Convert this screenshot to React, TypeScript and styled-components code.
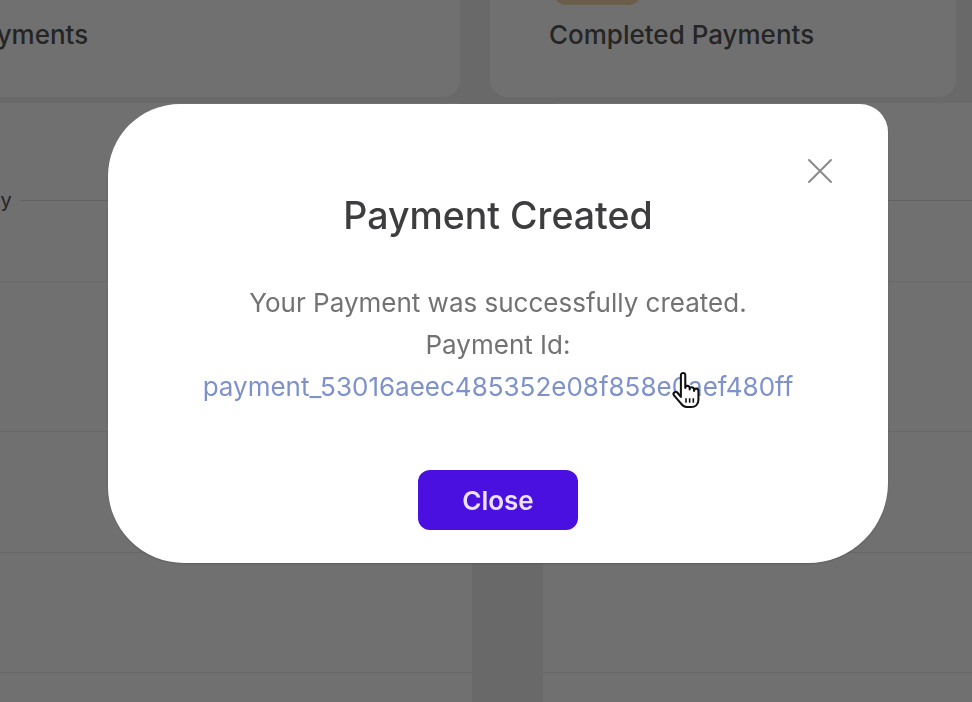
import styled, { createGlobalStyle } from 'styled-components'

const GlobalStyle = createGlobalStyle`
  html, body {
    margin: 0;
    padding: 0;
    background: #f0f0f0;
    overflow: hidden;
  }
  body {
    font-family: Inter, "Noto Sans", "Liberation Sans", sans-serif;
  }
`

const Page = styled.div`
  width: 972px;
  height: 702px;
  overflow: hidden;
  background: #f0f0f0;
`

const StatsRow = styled.div`
  display: grid;
  grid-template-columns: 662px 466px;
  gap: 30px;
  margin: -55px 0 0 -202px;
`

const StatCard = styled.div`
  display: flex;
  flex-direction: column;
  gap: 18px;
  padding: 20px 59px 50px;
  background: #fff;
  border-radius: 18px;
`

const StatBadge = styled.div`
  width: 85px;
  height: 40px;
  margin-left: 6px;
  border-radius: 10px;
  background: #f4d9ae;
`

const StatLabel = styled.span`
  font-size: 26px;
  line-height: 24px;
  font-weight: 500;
  color: #555;
  white-space: nowrap;
`

const ContentGrid = styled.div`
  display: grid;
  grid-template-columns: 683px 500px;
  gap: 71px;
  margin: 6px 0 0 -211px;
`

const Panel = styled.div`
  display: flex;
  flex-direction: column;
  background: #fff;
  border-radius: 16px;
  min-height: 640px;
`

const PanelHeader = styled.div`
  display: flex;
  align-items: center;
  gap: 9px;
  height: 30px;
  padding: 82px 0 0 67px;
`

const PanelTitle = styled.span`
  font-size: 20px;
  color: #555;
  white-space: nowrap;
`

const Rule = styled.div`
  flex: 1;
  height: 1px;
  background: #e0e0e0;
`

const PanelRow = styled.div<{ $h: number }>`
  height: ${({ $h }) => $h - 1}px;
  border-bottom: 1px solid #ededed;
`

const Overlay = styled.div`
  position: fixed;
  inset: 0;
  background: rgba(0, 0, 0, 0.56);
  display: flex;
  align-items: flex-start;
  padding: 104px 0 0 108px;
`

const Modal = styled.div`
  position: relative;
  width: 780px;
  height: 459px;
  box-sizing: border-box;
  padding-top: 88px;
  display: flex;
  flex-direction: column;
  align-items: center;
  background: #fff;
  border-radius: 72px 28px 80px 76px;
  box-shadow: 0 1px 2px rgba(0, 0, 0, 0.18);
`

const CloseIcon = styled.button`
  position: absolute;
  top: 51px;
  right: 52px;
  width: 32px;
  height: 32px;
  padding: 0;
  border: none;
  background: none;
  display: flex;
  align-items: center;
  justify-content: center;
`

const Title = styled.h2`
  margin: 0;
  font-size: 37.5px;
  line-height: 48px;
  font-weight: 500;
  color: #3d3d40;
`

const Message = styled.div`
  margin-top: 42px;
  display: flex;
  flex-direction: column;
  align-items: center;
  font-size: 26px;
  line-height: 42px;
  color: #727272;
`

const PaymentLink = styled.a`
  position: relative;
  color: #7e91ca;
  text-decoration: none;
`

const Cursor = styled.svg`
  position: absolute;
  left: 468px;
  top: 6px;
`

const CloseButton = styled.button`
  margin-top: 62px;
  width: 160px;
  height: 60px;
  border: none;
  border-radius: 12px;
  background: #4a10e0;
  color: #eae2ff;
  font-family: inherit;
  font-size: 26px;
  font-weight: 600;
`

export default function App() {
  return (
    <>
      <GlobalStyle />
      <Page>
        <StatsRow>
          <StatCard>
            <StatBadge />
            <StatLabel>Pending Payments</StatLabel>
          </StatCard>
          <StatCard>
            <StatBadge />
            <StatLabel>Completed Payments</StatLabel>
          </StatCard>
        </StatsRow>
        <ContentGrid>
          <Panel>
            <PanelHeader>
              <PanelTitle>Payment History</PanelTitle>
              <Rule />
            </PanelHeader>
            <PanelRow $h={67} />
            <PanelRow $h={150} />
            <PanelRow $h={121} />
            <PanelRow $h={120} />
          </Panel>
          <Panel>
            <PanelHeader>
              <PanelTitle>Recent Activity</PanelTitle>
              <Rule />
            </PanelHeader>
            <PanelRow $h={67} />
            <PanelRow $h={150} />
            <PanelRow $h={121} />
            <PanelRow $h={120} />
          </Panel>
        </ContentGrid>
      </Page>
      <Overlay>
        <Modal>
          <CloseIcon aria-label="Close">
            <svg width="26" height="26" viewBox="0 0 26 26" fill="none">
              <path d="M2 2L24 24M24 2L2 24" stroke="#8a8a8a" strokeWidth="2" strokeLinecap="round" />
            </svg>
          </CloseIcon>
          <Title>Payment Created</Title>
          <Message>
            <span>Your Payment was successfully created.</span>
            <span>Payment Id:</span>
            <PaymentLink href="#">
              payment_53016aeec485352e08f858e0aef480ff
              <Cursor width="30" height="38" viewBox="0 0 20 26">
                <path
                  d="M6.5 2.2a1.5 1.5 0 0 1 3 0V11a1.5 1.5 0 0 1 3 0v1a1.5 1.5 0 0 1 3 0v1a1.5 1.5 0 0 1 3 0v6c0 3-2 5-5 5h-3c-2 0-3-1-4-2.5L1.8 16a1.5 1.5 0 0 1 2.4-1.8L6.5 17Z"
                  fill="#fff"
                  stroke="#111"
                  strokeWidth="1.4"
                  strokeLinejoin="round"
                />
                <path d="M10 18v3M12.5 18v3M15 18v3" stroke="#111" strokeWidth="1.1" />
              </Cursor>
            </PaymentLink>
          </Message>
          <CloseButton>Close</CloseButton>
        </Modal>
      </Overlay>
    </>
  )
}
